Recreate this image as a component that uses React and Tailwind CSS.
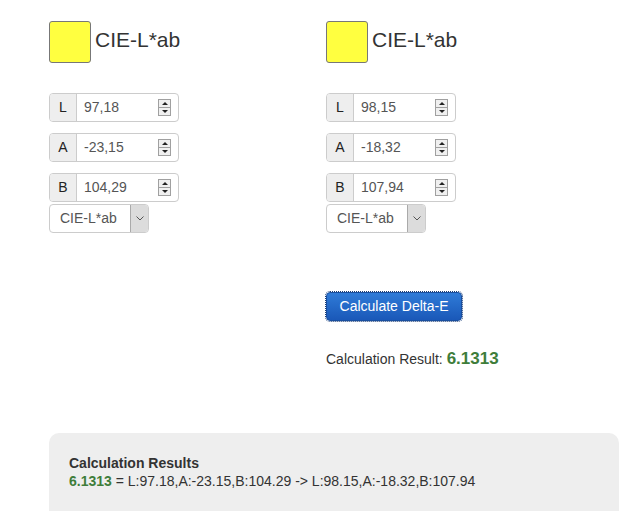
import { useState } from "react";

// Delta-E calculator: two CIE-L*ab colours side by side
const COLORS = [
  { L: "97,18", A: "-23,15", B: "104,29" },
  { L: "98,15", A: "-18,32", B: "107,94" },
];

function Spinner() {
  return (
    <div className="flex flex-col w-[13px] h-[17px] border border-[#a0a0a0] bg-[#f0f0f0] mr-[7px]">
      <div className="flex-1 flex items-center justify-center border-b border-[#a0a0a0]">
        <div className="w-0 h-0 border-l-[3px] border-r-[3px] border-b-[3px] border-l-transparent border-r-transparent border-b-[#222]" />
      </div>
      <div className="flex-1 flex items-center justify-center">
        <div className="w-0 h-0 border-l-[3px] border-r-[3px] border-t-[3px] border-l-transparent border-r-transparent border-t-[#222]" />
      </div>
    </div>
  );
}

function Campo({ label, value }) {
  return (
    <div className="flex items-center w-[130px] h-[29px] border border-[#ccc] rounded-[4px] bg-white overflow-hidden">
      <div className="w-[27px] h-full flex items-center justify-center bg-[#eee] border-r border-[#ccc] text-[14px] text-[#222]">
        {label}
      </div>
      <div className="flex-1 pl-[7px] text-[14px] text-[#555]">{value}</div>
      <Spinner />
    </div>
  );
}

function Selector() {
  return (
    <div className="flex items-center w-[100px] h-[29px] border border-[#ccc] rounded-[4px] bg-white overflow-hidden">
      <div className="flex-1 pl-[10px] text-[14px] text-[#555]">CIE-L*ab</div>
      <div className="w-[18px] h-full flex items-center justify-center bg-[#dcdcdc] border-l border-[#aaa]">
        <svg width="8" height="5" viewBox="0 0 8 5">
          <path d="M0.5 0.5 L4 4 L7.5 0.5" fill="none" stroke="#555" strokeWidth="1" />
        </svg>
      </div>
    </div>
  );
}

function Columna({ c }) {
  return (
    <div className="flex flex-col">
      <div className="flex items-center h-[42px] gap-[4px]">
        <div className="w-[42px] h-[42px] bg-[#ffff40] border border-[#777] rounded-[3px]" />
        <span className="text-[21px] text-[#333] mb-[4px]">CIE-L*ab</span>
      </div>
      <div className="mt-[30px] flex flex-col gap-[11px]">
        <Campo label="L" value={c.L} />
        <Campo label="A" value={c.A} />
        <Campo label="B" value={c.B} />
      </div>
      <div className="mt-[2px]">
        <Selector />
      </div>
    </div>
  );
}

export default function App() {
  const [resultado] = useState("6.1313");

  return (
    <div className="min-h-[511px] bg-white pl-[49px] pt-[21px] pr-[5px] font-['Liberation_Sans',Arial,sans-serif] text-[#333]">
      <div className="grid grid-cols-[277px_1fr]">
        <Columna c={COLORS[0]} />
        <div className="flex flex-col">
          <Columna c={COLORS[1]} />
          <button className="mt-[59px] w-[136px] h-[29px] rounded-[4px] border border-[#1a4f9e] bg-gradient-to-b from-[#2f7bd8] to-[#1a58b8] text-white text-[14px] outline-1 outline-dotted outline-[#1b3e78]">
            Calculate Delta-E
          </button>
          <div className="mt-[28px] text-[14px] text-[#333] leading-[20px]">
            Calculation Result:{" "}
            <span className="text-[17px] font-bold text-[#3e7d3a]">{resultado}</span>
          </div>
        </div>
      </div>

      <div className="mt-[64px] bg-[#eee] rounded-[10px] h-[90px] px-[20px] pt-[21px]">
        <div className="text-[14px] font-bold text-[#333] leading-[18px]">Calculation Results</div>
        <div className="text-[14px] text-[#333] leading-[18px]">
          <span className="text-[#3e7d3a] font-bold">{resultado}</span> = L:97.18,A:-23.15,B:104.29 -&gt; L:98.15,A:-18.32,B:107.94
        </div>
      </div>
    </div>
  );
}
